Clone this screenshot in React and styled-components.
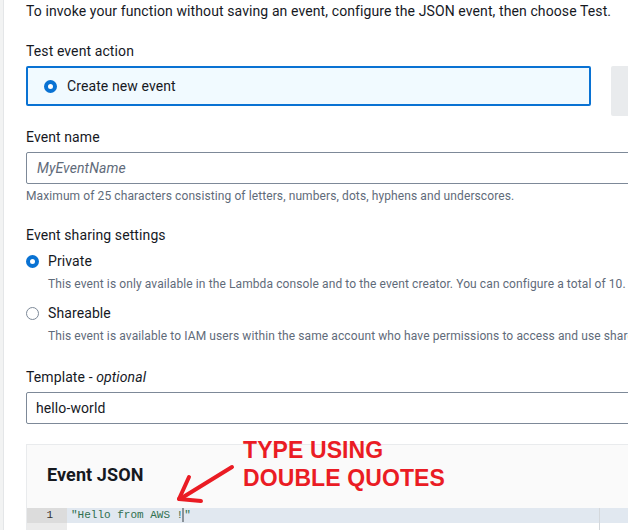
import React from "react";
import styled, { createGlobalStyle } from "styled-components";

const Global = createGlobalStyle`
  html, body { margin: 0; padding: 0; background: #fff; }
  body { width: 628px; height: 530px; overflow: hidden; font-family: Roboto, "Liberation Sans", Arial, sans-serif; color: #16191f; letter-spacing: 0.1px; }
`;

const Page = styled.div`
  position: relative;
  height: 530px;
  padding-left: 26px;
  background: linear-gradient(to right, #f2f3f3 0 3px, #e4e6e8 3px 4px, #fff 4px);
  display: flex;
  flex-direction: column;
  width: 760px;
  box-sizing: border-box;
`;

const Intro = styled.p`
  margin: 0;
  font-size: 14px;
  line-height: 22px;
`;

const Field = styled.div`
  display: flex;
  flex-direction: column;
  margin-top: ${(p) => p.$top || 20}px;
`;

const Label = styled.div`
  font-size: 14px;
  line-height: 22px;
  margin-bottom: 4px;
  em { font-style: italic; }
`;

const Tiles = styled.div`
  display: grid;
  grid-template-columns: 565px 565px;
  gap: 20px;
  align-items: start;
  height: 40px;
`;

const Tile = styled.div`
  box-sizing: border-box;
  height: ${(p) => (p.$disabled ? 50 : 40)}px;
  border-radius: 2px;
  border: ${(p) => (p.$disabled ? "none" : "2px solid #0972d3")};
  background: ${(p) => (p.$disabled ? "#e9ebed" : "#f1faff")};
  display: flex;
  align-items: center;
  padding-left: 16px;
  gap: 10px;
  font-size: 14px;
`;

const RadioDot = styled.span`
  box-sizing: border-box;
  flex: none;
  width: 13px;
  height: 13px;
  border-radius: 50%;
  border: ${(p) => (p.$checked ? "4px solid #0972d3" : "1.5px solid #7d8998")};
  background: #fff;
`;

const Input = styled.div`
  box-sizing: border-box;
  height: 32px;
  width: 640px;
  border: 1px solid #7d8998;
  border-radius: 2px;
  display: flex;
  align-items: center;
  padding-left: ${(p) => (p.$italic ? 10 : 9)}px;
  font-size: 14px;
  color: ${(p) => (p.$italic ? "#5f6b7a" : "#16191f")};
  font-style: ${(p) => (p.$italic ? "italic" : "normal")};
`;

const Help = styled.div`
  font-size: 12px;
  line-height: 16px;
  color: #5f6b7a;
  margin-top: 4px;
  white-space: nowrap;
`;

const RadioRow = styled.label`
  display: flex;
  align-items: center;
  gap: 9px;
  font-size: 14px;
  line-height: 22px;
  margin-top: ${(p) => p.$top || 0}px;
`;

const RadioDesc = styled.div`
  font-size: 12px;
  line-height: 16px;
  color: #5f6b7a;
  padding-left: 22px;
  margin-top: 4px;
  white-space: nowrap;
`;

const JsonPanel = styled.div`
  margin-top: 20px;
  width: 700px;
  border-top: 1px solid #e9ebed;
  border-left: 1px solid #e9ebed;
  background: #fafafa;
  display: flex;
  flex-direction: column;
`;

const JsonTitle = styled.h2`
  margin: 0;
  font-size: 18px;
  font-weight: 700;
  line-height: 22px;
  padding: 19px 20px 22px;
  color: #16191f;
`;

const Editor = styled.div`
  display: grid;
  grid-template-columns: 40px 1fr;
  background: #fff;
  font-family: "Liberation Mono", "DejaVu Sans Mono", monospace;
  font-size: 11px;
  line-height: 15px;
  letter-spacing: 0;
`;

const Gutter = styled.div`
  background: #ebebeb;
  display: flex;
  flex-direction: column;
`;

const LineNo = styled.div`
  background: ${(p) => (p.$active ? "#dcdcdc" : "transparent")};
  text-align: right;
  padding-right: 14px;
  color: #333;
  height: 15px;
`;

const Code = styled.div`
  display: flex;
  flex-direction: column;
  position: relative;
`;

const CodeLine = styled.div`
  height: 15px;
  background: ${(p) => (p.$active ? "#e1e8f0" : "transparent")};
  padding-left: 4px;
  color: #2f6f4e;
  white-space: pre;
  display: flex;
`;

const Cursor = styled.span`
  display: inline-block;
  width: 2px;
  height: 14px;
  background: #8a9299;
  margin: 0 0 0 -1px;
`;

const PrintMargin = styled.div`
  position: absolute;
  top: 0;
  bottom: 0;
  left: 532px;
  width: 1px;
  background: #d4d8dc;
`;

const Annotation = styled.div`
  position: absolute;
  left: 243px;
  top: 436px;
  font-family: "Liberation Sans", Arial, sans-serif;
  font-weight: 700;
  font-size: 23px;
  line-height: 28px;
  color: #ea1c24;
  white-space: nowrap;
  letter-spacing: 0.1px;
`;

const Arrow = styled.svg`
  position: absolute;
  left: 170px;
  top: 460px;
  overflow: visible;
`;

export default function App() {
  return (
    <>
      <Global />
      <Page>
        <Intro>To invoke your function without saving an event, configure the JSON event, then choose Test.</Intro>

        <Field $top={18}>
          <Label>Test event action</Label>
          <Tiles>
            <Tile>
              <RadioDot $checked />
              <span>Create new event</span>
            </Tile>
            <Tile $disabled />
          </Tiles>
        </Field>

        <Field>
          <Label>Event name</Label>
          <Input $italic>MyEventName</Input>
          <Help>Maximum of 25 characters consisting of letters, numbers, dots, hyphens and underscores.</Help>
        </Field>

        <Field>
          <Label>Event sharing settings</Label>
          <RadioRow>
            <RadioDot $checked />
            Private
          </RadioRow>
          <RadioDesc>This event is only available in the Lambda console and to the event creator. You can configure a total of 10.</RadioDesc>
          <RadioRow $top={10}>
            <RadioDot />
            Shareable
          </RadioRow>
          <RadioDesc>This event is available to IAM users within the same account who have permissions to access and use shareable events.</RadioDesc>
        </Field>

        <Field $top={22}>
          <Label>
            Template - <em>optional</em>
          </Label>
          <Input>hello-world</Input>
        </Field>

        <JsonPanel>
          <JsonTitle>Event JSON</JsonTitle>
          <Editor>
            <Gutter>
              <LineNo $active>1</LineNo>
              <LineNo />
            </Gutter>
            <Code>
              <CodeLine $active>
                "Hello from AWS !<Cursor />"
              </CodeLine>
              <CodeLine />
              <PrintMargin />
            </Code>
          </Editor>
        </JsonPanel>

        <Annotation>
          TYPE USING
          <br />
          DOUBLE QUOTES
        </Annotation>
        <Arrow width="70" height="45" viewBox="170 460 70 45">
          <g stroke="#ea1c24" strokeWidth="4" strokeLinecap="round" fill="none">
            <path d="M232 467 L180 499" />
            <path d="M179 499 L189 477" />
            <path d="M179 499 L201 501" />
          </g>
        </Arrow>
      </Page>
    </>
  );
}
